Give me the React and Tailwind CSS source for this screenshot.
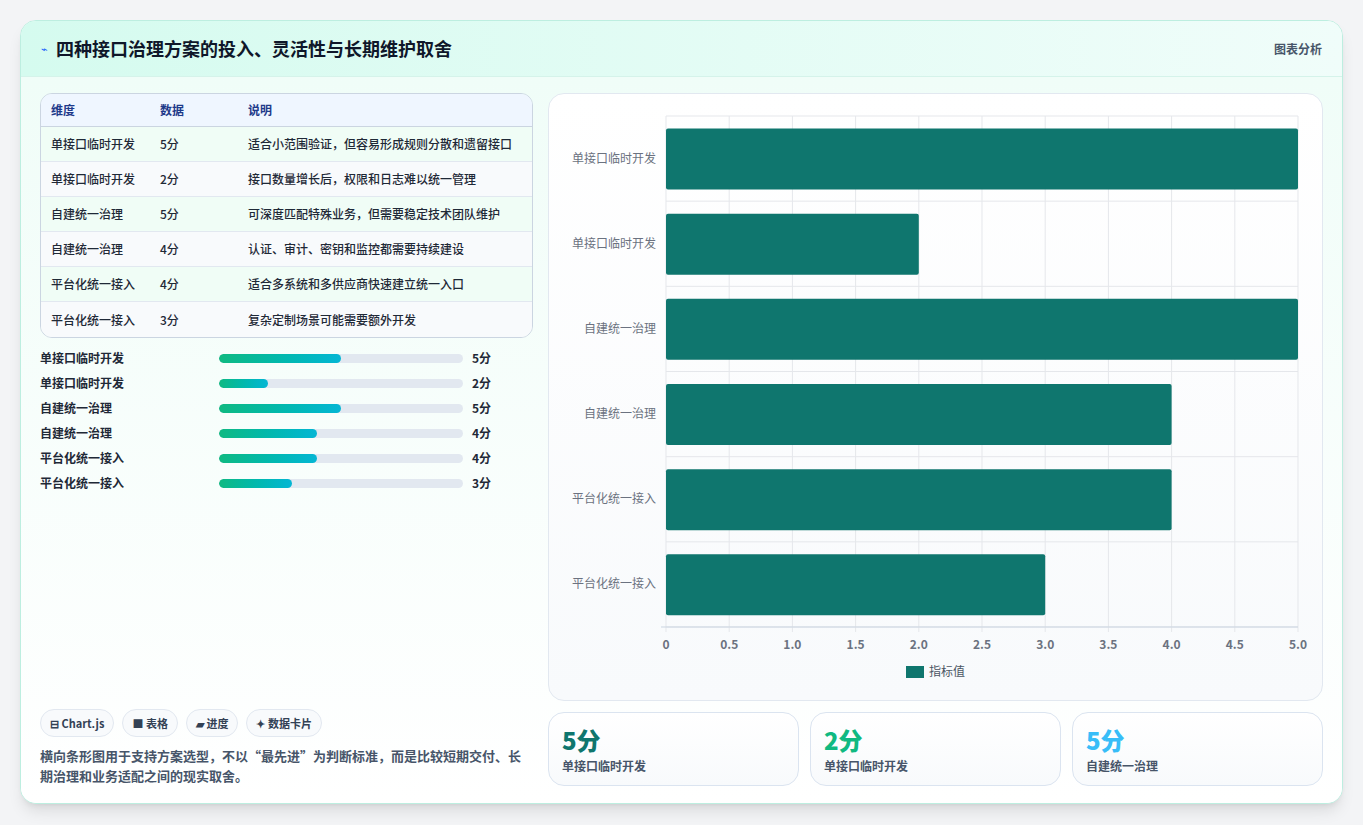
const rows = [
  ["单接口临时开发", 5, "适合小范围验证，但容易形成规则分散和遗留接口"],
  ["单接口临时开发", 2, "接口数量增长后，权限和日志难以统一管理"],
  ["自建统一治理", 5, "可深度匹配特殊业务，但需要稳定技术团队维护"],
  ["自建统一治理", 4, "认证、审计、密钥和监控都需要持续建设"],
  ["平台化统一接入", 4, "适合多系统和多供应商快速建立统一入口"],
  ["平台化统一接入", 3, "复杂定制场景可能需要额外开发"],
];
const F = { fontFamily: '"Noto Sans CJK SC","Noto Sans",sans-serif' };

function Chart() {
  const L = 117, R = 749, T = 22, B = 533;
  const band = (B - T) / 6, u = (R - L) / 5;
  return (
    <svg width="773" height="607" className="block" style={F}>
      {Array.from({ length: 11 }).map((_, i) => (
        <line key={i} x1={L + i * u / 2} x2={L + i * u / 2} y1={T} y2={B + 5} stroke="#e5e7eb" />
      ))}
      {Array.from({ length: 7 }).map((_, i) => (
        <line key={i} x1={L} x2={R} y1={T + i * band} y2={T + i * band} stroke="#e5e7eb" />
      ))}
      <line x1={L - 5} x2={R} y1={B} y2={B} stroke="#cbd5e1" />
      {rows.map((r, i) => (
        <g key={i}>
          <rect x={L} y={T + i * band + 12.5} width={r[1] * u} height={61} rx="2" fill="#0f766e" />
          <text x={L - 10} y={T + i * band + band / 2 + 4} textAnchor="end" fontSize="12" fill="#6b7280">{r[0]}</text>
        </g>
      ))}
      {["0","0.5","1.0","1.5","2.0","2.5","3.0","3.5","4.0","4.5","5.0"].map((t, i) => (
        <text key={t} x={L + i * u / 2} y={555} textAnchor="middle" fontSize="12" fontWeight="600" fill="#6b7280">{t}</text>
      ))}
      <rect x="357" y="572" width="18" height="12" fill="#0f766e" />
      <text x="380" y="582" fontSize="12" fill="#4b5563">指标值</text>
    </svg>
  );
}

export default function App() {
  return (
    <div className="min-h-screen bg-[#f3f4f6] pt-5 px-5" style={F}>
      <div className="h-[784px] bg-white rounded-2xl border border-[#bdeee0] shadow-lg overflow-hidden flex flex-col">
        <div className="h-[56px] shrink-0 bg-gradient-to-r from-[#d5fbef] to-[#f0fdfa] border-b border-[#d5f3ea] flex items-center justify-between px-5">
          <div className="flex items-center gap-2">
            <span className="text-[11px] text-blue-600">⌁</span>
            <span className="text-[18px] font-bold text-[#0f172a]">四种接口治理方案的投入、灵活性与长期维护取舍</span>
          </div>
          <span className="text-[12px] font-semibold text-[#475569]">图表分析</span>
        </div>
        <div className="flex-1 flex gap-[15px] px-[19px] pt-4 pb-[17px] bg-gradient-to-b from-[#f0fdf8] to-white">
          <div className="w-[496px] flex flex-col">
            <div className="rounded-xl border border-[#cbd5e1] overflow-hidden text-[12px]">
              <div className="flex h-[33px] items-center bg-[#eff6ff] text-[#1e3a8a] font-semibold border-b border-[#cbd5e1]">
                <div className="w-[119px] pl-[10px]">维度</div><div className="w-[88px]">数据</div><div>说明</div>
              </div>
              {rows.map((r, i) => (
                <div key={i} className={`flex h-[35px] items-center text-[#1f2937] font-medium ${i < 5 ? "border-b border-[#e2e8f0]" : ""} ${i % 2 ? "bg-[#f8fafc]" : "bg-[#f0fdf6]"}`}>
                  <div className="w-[119px] pl-[10px]">{r[0]}</div><div className="w-[88px]">{r[1]}分</div><div>{r[2]}</div>
                </div>
              ))}
            </div>
            <div className="mt-[12px] flex flex-col gap-[9px]">
              {rows.map((r, i) => (
                <div key={i} className="flex items-center h-[16px] text-[12px] font-semibold text-[#1f2937]">
                  <div className="w-[179px]">{r[0]}</div>
                  <div className="w-[244px] h-[9px] rounded-full bg-[#e2e8f0] overflow-hidden">
                    <div className="h-full rounded-full bg-gradient-to-r from-[#10b981] to-[#06b6d4]" style={{ width: `${r[1] * 10}%` }} />
                  </div>
                  <div className="ml-[9px]">{r[1]}分</div>
                </div>
              ))}
            </div>
            <div className="mt-auto">
              <div className="flex gap-[8px] text-[11px] font-semibold text-[#334155]">
                {["⊟ Chart.js", "■ 表格", "▰ 进度", "✦ 数据卡片"].map(t => (
                  <span key={t} className="h-[28px] px-[9px] flex items-center rounded-full border border-[#e2e8f0] bg-[#f8fafc]">{t}</span>
                ))}
              </div>
              <p className="mt-[9px] text-[13px] leading-[20px] font-semibold text-[#475569]">横向条形图用于支持方案选型，不以“最先进”为判断标准，而是比较短期交付、长期治理和业务适配之间的现实取舍。</p>
            </div>
          </div>
          <div className="flex-1 flex flex-col gap-[11px]">
            <div className="h-[608px] rounded-2xl border border-[#e2e8f0] bg-gradient-to-b from-white to-[#f8fafc] overflow-hidden">
              <Chart />
            </div>
            <div className="flex gap-[11px] flex-1">
              {[["5分", "text-[#0f766e]", "单接口临时开发"], ["2分", "text-[#10b981]", "单接口临时开发"], ["5分", "text-[#38bdf8]", "自建统一治理"]].map((c, i) => (
                <div key={i} className="flex-1 rounded-2xl border border-[#dbe4f0] bg-gradient-to-b from-white to-[#f8fafc] px-[13px] pt-[12px]">
                  <div className={`text-[24px] leading-[30px] font-extrabold ${c[1]}`}>{c[0]}</div>
                  <div className="text-[12px] font-semibold text-[#475569] mt-[2px]">{c[2]}</div>
                </div>
              ))}
            </div>
          </div>
        </div>
      </div>
    </div>
  );
}
